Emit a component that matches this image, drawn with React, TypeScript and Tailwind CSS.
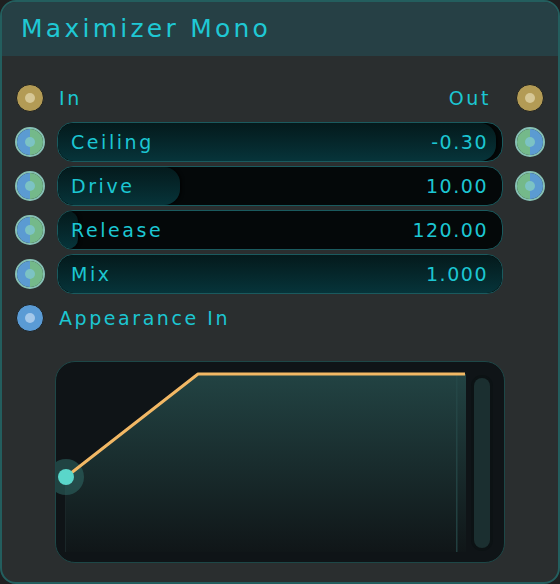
import React from "react";

const font = { fontFamily: '"DejaVu Sans", "Noto Sans", sans-serif' };

function GoldSocket() {
  return (
    <div className="w-[28px] h-[28px] rounded-full bg-[#b39b55] border-[1.5px] border-[#1c1f1f] flex items-center justify-center">
      <div className="w-[10px] h-[10px] rounded-full bg-[#d6c796]" />
    </div>
  );
}

function BlueSocket() {
  return (
    <div className="w-[28px] h-[28px] rounded-full bg-[#5a9bd5] border-[1.5px] border-[#1c1f1f] flex items-center justify-center">
      <div className="w-[10px] h-[10px] rounded-full bg-[#a4c8ea]" />
    </div>
  );
}

function SplitSocket({ flip = false }: { flip?: boolean }) {
  return (
    <div className="relative w-[30px] h-[30px] rounded-full border-2 border-[#86c0b4] overflow-hidden flex">
      <div className={flip ? "w-1/2 h-full bg-[#74b98a]" : "w-1/2 h-full bg-[#5b9bd2]"} />
      <div className={flip ? "w-1/2 h-full bg-[#5b9bd2]" : "w-1/2 h-full bg-[#74b98a]"} />
      <div className="absolute left-1/2 top-1/2 -translate-x-1/2 -translate-y-1/2 w-[10px] h-[10px] rounded-full bg-[#7cc3c4]" />
    </div>
  );
}

function Slider({ label, value, fill }: { label: string; value: string; fill: number }) {
  return (
    <div className="relative flex-1 h-[40px] rounded-[16px] border border-[#1a5a5e] bg-[#040809] overflow-hidden">
      <div
        className="absolute left-0 top-0 bottom-0 rounded-[16px] bg-gradient-to-b from-[#041a1c] to-[#06343a] shadow-[2px_0_3px_rgba(0,0,0,0.6)]"
        style={{ width: `${fill}%` }}
      />
      <div className="relative h-full flex items-center justify-between pl-[13px] pr-[14px] text-[19px] text-[#1cc6d2]">
        <span className="tracking-[0.135em]">{label}</span>
        <span className="tracking-[0.08em]">{value}</span>
      </div>
    </div>
  );
}

export default function App() {
  return (
    <div style={font} className="w-[560px] h-[584px] bg-[#1e1f20]">
      <div className="w-full h-full rounded-[16px] border-2 border-[#235e5e] bg-[#2a2e2f] overflow-hidden flex flex-col">
        <div className="h-[54px] bg-[#264045] flex items-center pl-[19px] text-[25px] tracking-[0.13em] text-[#1fc8d4] shrink-0">
          Maximizer Mono
        </div>
        <div className="flex flex-col pt-[25px] px-[13px]">
          <div className="flex items-center h-[34px] gap-[14px] text-[19px] tracking-[0.135em] text-[#1cc6d2]">
            <div className="w-[30px] flex justify-center"><GoldSocket /></div>
            <span className="flex-1">In</span>
            <span>Out</span>
            <div className="w-[30px] flex justify-center ml-[10px]"><GoldSocket /></div>
          </div>
          <div className="flex flex-col gap-[4px] mt-[7px]">
            <div className="flex items-center gap-[12px]">
              <SplitSocket />
              <Slider label="Ceiling" value="-0.30" fill={98.6} />
              <SplitSocket flip />
            </div>
            <div className="flex items-center gap-[12px]">
              <SplitSocket />
              <Slider label="Drive" value="10.00" fill={27.5} />
              <SplitSocket flip />
            </div>
            <div className="flex items-center gap-[12px]">
              <SplitSocket />
              <Slider label="Release" value="120.00" fill={4.5} />
              <div className="w-[30px]" />
            </div>
            <div className="flex items-center gap-[12px]">
              <SplitSocket />
              <Slider label="Mix" value="1.000" fill={100} />
              <div className="w-[30px]" />
            </div>
          </div>
          <div className="flex items-center h-[34px] gap-[14px] mt-[7px] text-[19px] tracking-[0.135em] text-[#1cc6d2]">
            <div className="w-[30px] flex justify-center"><BlueSocket /></div>
            <span>Appearance In</span>
          </div>
          <div className="mt-[26px] ml-[40px] mr-[40px] h-[202px] rounded-[20px] border border-[#1d4747] bg-[#0f1417] overflow-hidden relative">
            <svg width="450" height="200" viewBox="0 0 450 200" className="absolute left-0 top-0">
              <defs>
                <linearGradient id="ga" x1="0" y1="0" x2="0" y2="1">
                  <stop offset="0" stopColor="#224343" />
                  <stop offset="1" stopColor="#101618" />
                </linearGradient>
              </defs>
              <polygon points="10,115 142,12 410,12 410,190 10,190" fill="url(#ga)" />
              <rect x="400" y="12" width="1.5" height="178" fill="#264848" opacity="0.8" />
              <rect x="9" y="115" width="1" height="75" fill="#1a2628" />
              <circle cx="10" cy="115" r="18" fill="#2f6a66" opacity="0.55" />
              <polyline points="10,115 142,12 409,12" fill="none" stroke="#f2b865" strokeWidth="3" strokeLinejoin="round" />
              <circle cx="10" cy="115" r="8" fill="#5ad6ca" />
              <rect x="415" y="13" width="22" height="176" rx="11" fill="#0c1214" />
              <rect x="418" y="16" width="16" height="170" rx="8" fill="#1b2f30" />
            </svg>
          </div>
        </div>
      </div>
    </div>
  );
}
